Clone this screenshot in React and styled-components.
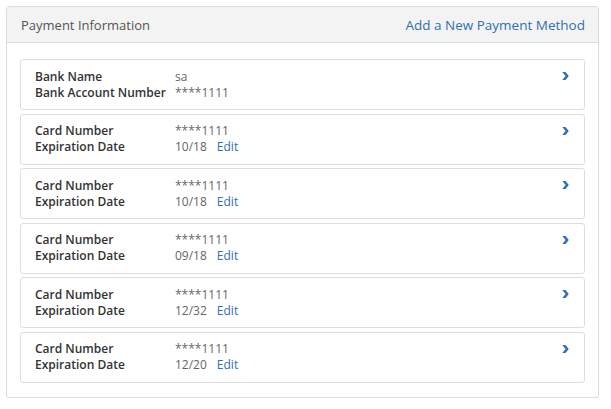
import React from 'react'
import { styled, createGlobalStyle } from 'styled-components'

const GlobalStyle = createGlobalStyle`
  html, body {
    margin: 0;
    padding: 0;
    background: #fff;
    font-family: "Open Sans", "Liberation Sans", sans-serif;
  }
`

const methods = [
  { type: 'bank', name: 'sa', number: '****1111' },
  { type: 'card', number: '****1111', exp: '10/18' },
  { type: 'card', number: '****1111', exp: '10/18' },
  { type: 'card', number: '****1111', exp: '09/18' },
  { type: 'card', number: '****1111', exp: '12/32' },
  { type: 'card', number: '****1111', exp: '12/20' },
]

const Chevron = () => (
  <svg width="7" height="8" viewBox="0 0 7 8">
    <path d="M0.3 0 L3.5 0 L6.8 4 L3.5 8 L0.3 8 L3.6 4 Z" fill="#2f70b5" />
  </svg>
)

const App = () => {
  return (
    <Page>
      <GlobalStyle />
      <Panel>
        <Header>
          <Title>Payment Information</Title>
          <AddLink href="#">Add a New Payment Method</AddLink>
        </Header>
        <List>
          {methods.map((m, i) => (
            <Card key={i}>
              <Details>
                {m.type === 'bank' ? (
                  <>
                    <Label>Bank Name</Label>
                    <Value>{m.name}</Value>
                    <Label>Bank Account Number</Label>
                    <Value>{m.number}</Value>
                  </>
                ) : (
                  <>
                    <Label>Card Number</Label>
                    <Value>{m.number}</Value>
                    <Label>Expiration Date</Label>
                    <Value>
                      {m.exp}
                      <EditLink href="#">Edit</EditLink>
                    </Value>
                  </>
                )}
              </Details>
              <Arrow>
                <Chevron />
              </Arrow>
            </Card>
          ))}
        </List>
      </Panel>
    </Page>
  )
}

export default App

const Page = styled.div`
  padding: 6px 12px 0 6px;
  width: 611px;
  box-sizing: border-box;
`

const Panel = styled.div`
  border: 1px solid #dcdcdc;
  border-radius: 3px;
  background: #fff;
  box-shadow: 0 1px 1px rgba(0, 0, 0, 0.04);
`

const Header = styled.div`
  display: flex;
  justify-content: space-between;
  align-items: center;
  height: 35px;
  padding: 0 13px 0 14px;
  background: #f3f3f3;
  border-bottom: 1px solid #dcdcdc;
`

const Title = styled.span`
  font-size: 13px;
  color: #555;
`

const AddLink = styled.a`
  font-size: 13.5px;
  color: #2f70b5;
  text-decoration: none;
`

const List = styled.div`
  display: flex;
  flex-direction: column;
  gap: 3.6px;
  padding: 16px 13px 14px 13px;
`

const Card = styled.div`
  display: flex;
  justify-content: space-between;
  align-items: flex-start;
  height: 51px;
  box-sizing: border-box;
  border: 1px solid #dedede;
  border-radius: 3px;
  padding: 8px 14px 0 14px;
`

const Details = styled.div`
  display: grid;
  grid-template-columns: 140px auto;
  grid-auto-rows: 16px;
  align-items: center;
  font-size: 12px;
`

const Label = styled.span`
  font-weight: 600;
  color: #333;
`

const Value = styled.span`
  color: #666;
`

const EditLink = styled.a`
  margin-left: 10px;
  color: #2f70b5;
  text-decoration: none;
`

const Arrow = styled.div`
  display: flex;
  padding-top: 4px;
  margin-right: 1px;
`
